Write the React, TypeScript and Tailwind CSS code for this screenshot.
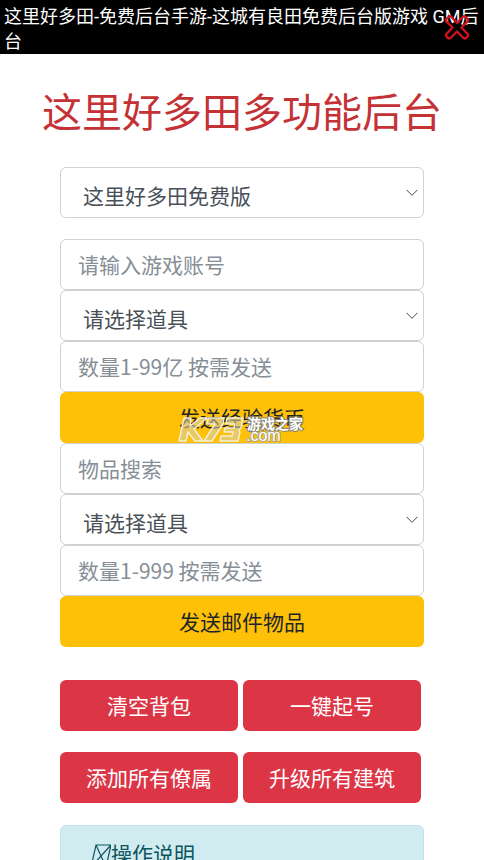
import type { InputHTMLAttributes, ReactNode } from "react";

const control =
  "block h-[51px] w-full rounded-md border border-[#cfd1d4] bg-white text-[21px] leading-8 outline-none";

function TextField({ label, ...rest }: { label: string } & InputHTMLAttributes<HTMLInputElement>) {
  return (
    <input
      type="text"
      aria-label={label}
      placeholder={label}
      className={`${control} px-[17px] pb-0.5 text-[#495057] placeholder:text-[#868e96] placeholder:opacity-100`}
      {...rest}
    />
  );
}

function SelectField({ label, option }: { label: string; option: string }) {
  return (
    <div className="relative">
      <select aria-label={label} className={`${control} appearance-none pt-1 pr-8 pl-[22px] text-[#495057]`}>
        <option>{option}</option>
      </select>
      <svg
        viewBox="0 0 12 8"
        className="pointer-events-none absolute top-[22px] right-[6px] h-2 w-3"
        fill="none"
        stroke="#444"
        strokeWidth="1"
        aria-hidden="true"
      >
        <path d="M.5 .8 6 6.3 11.5 .8" />
      </svg>
    </div>
  );
}

function SendButton({ children }: { children: ReactNode }) {
  return (
    <button
      type="button"
      className="block h-[51px] w-full rounded-md bg-[#ffc107] pb-0.5 text-center text-[21px] leading-8 text-[#212529]"
    >
      {children}
    </button>
  );
}

function ActionButton({ children }: { children: ReactNode }) {
  return (
    <button
      type="button"
      className="h-[51px] flex-1 rounded-md bg-[#dc3545] pb-0.5 text-[21px] leading-8 text-white"
    >
      {children}
    </button>
  );
}

function Watermark() {
  return (
    <svg
      viewBox="0 0 128 30"
      className="pointer-events-none absolute top-6 left-1/2 h-[30px] w-32 -translate-x-1/2 overflow-visible"
      aria-label="K73 游戏之家 .com"
    >
      <g fill="#d9cfa8" fillOpacity=".6" stroke="#f6efda" strokeWidth="1.4" strokeLinejoin="round">
        <path d="M6 2h7l-1 8 10-8h7L16 13l9 12h-8l-7-9-2 9H1z" />
        <path d="M30 2h16l-1 6-11 17h-8l11-17h-8z" />
        <path d="M49 2h16l-2 10-2 2 1 2-2 9H42l1-5h11l1-4h-9l1-4h9l1-4h-9z" />
      </g>
      <text x="69" y="13" fontSize="14" fontWeight="700" fill="#fff" stroke="#8a8578" strokeWidth="2" paintOrder="stroke">
        游戏之家
      </text>
      <text
        x="68"
        y="25"
        fontSize="16"
        fill="#fff"
        stroke="#b0a683"
        strokeWidth="2"
        paintOrder="stroke"
        fontFamily="'Liberation Sans', sans-serif"
      >
        .com
      </text>
    </svg>
  );
}

export default function App() {
  return (
    <div className="h-screen overflow-hidden bg-white font-['Noto_Sans_CJK_SC',sans-serif]">
      <header className="relative bg-black px-1 pt-1 font-['Roboto','Noto_Sans_CJK_SC',sans-serif] text-[18px] leading-[25px] text-white">
        <p>这里好多田-免费后台手游-这城有良田免费后台版游戏 GM后台</p>
        <button type="button" aria-label="关闭" className="absolute top-[14px] right-[14px] h-[26px] w-[26px]">
          <svg
            viewBox="0 0 26 26"
            className="h-full w-full"
            fill="none"
            stroke="#d5101c"
            strokeWidth="2.4"
            strokeLinejoin="round"
            aria-hidden="true"
          >
            <path d="M4.5 3Q6 1.500 8 3.500L13 9 18 3.500Q20 1.500 21.500 3L23.500 5Q24.500 6.500 23 8L17.500 13.500 23.500 20Q24.500 21 23.500 22.500L22 24Q20.500 25 19 23.500L13 17.500 7 23.500Q5.500 25 4 24L2.500 22.500Q1.500 21 2.500 20L8.500 13.500 3 8Q1.500 6.500 2.500 5Z" />
          </svg>
        </button>
      </header>

      <main>
        <h1 className="pt-[26px] text-center text-[40px] leading-[60px] text-[#c43235]">这里好多田多功能后台</h1>

        <form className="mt-[27px] px-[60px]">
          <SelectField label="版本" option="这里好多田免费版" />

          <div className="mt-[21px]">
            <TextField label="请输入游戏账号" />
            <SelectField label="货币道具" option="请选择道具" />
            <TextField label="数量1-99亿 按需发送" />
            <div className="relative">
              <SendButton>发送经验货币</SendButton>
              <Watermark />
            </div>
            <TextField label="物品搜索" />
            <SelectField label="邮件道具" option="请选择道具" />
            <TextField label="数量1-999 按需发送" />
            <SendButton>发送邮件物品</SendButton>
          </div>

          <div className="mt-[33px] flex gap-[5px] pr-[3px]">
            <ActionButton>清空背包</ActionButton>
            <ActionButton>一键起号</ActionButton>
          </div>
          <div className="mt-[21px] flex gap-[5px] pr-[3px]">
            <ActionButton>添加所有僚属</ActionButton>
            <ActionButton>升级所有建筑</ActionButton>
          </div>
        </form>

        <section className="mx-[60px] mt-[22px] h-24 rounded-md border border-[#bee5eb] bg-[#d1ecf1] px-[30px] pt-[11px] text-[#0c5460]">
          <h2 className="flex items-start text-[21px] leading-8">
            <svg
              viewBox="0 0 20 24"
              className="mt-[7px] h-6 w-5"
              fill="none"
              stroke="currentColor"
              strokeWidth="1.2"
              aria-hidden="true"
            >
              <path d="M5 1H20L15 23H0ZM5 1 15 23M20 1 0 23" />
            </svg>
            操作说明
          </h2>
        </section>
      </main>
    </div>
  );
}
